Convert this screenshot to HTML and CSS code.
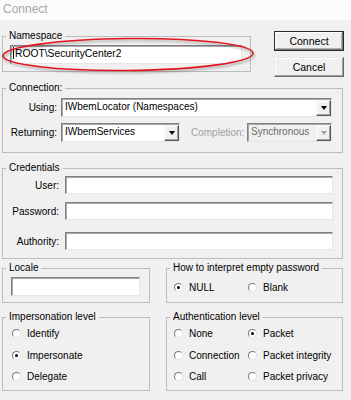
FILE: index.html
```html
<!DOCTYPE html>
<html lang="en">
<head>
    <meta charset="UTF-8">
    <title>Connect</title>
    <link rel="stylesheet" href="styles.css">
</head>
<body>
    <div class="titlebar">Connect</div>

    <div class="dialog">
        <div class="top-row">
            <fieldset class="group ns-group">
                <legend>Namespace</legend>
                <div class="group-body">
                    <div class="edit ns-edit"><span class="caret"></span>ROOT\SecurityCenter2</div>
                </div>
            </fieldset>
            <div class="buttons">
                <div class="btn btn-default">Connect</div>
                <div class="btn">Cancel</div>
            </div>
        </div>

        <fieldset class="group conn-group">
            <legend>Connection:</legend>
            <div class="group-body">
                <div class="field-row">
                    <span class="field-label">Using:</span>
                    <div class="combo using-combo">
                        <span class="combo-text">IWbemLocator (Namespaces)</span>
                        <span class="combo-btn"></span>
                    </div>
                </div>
                <div class="field-row second">
                    <span class="field-label">Returning:</span>
                    <div class="combo returning-combo">
                        <span class="combo-text">IWbemServices</span>
                        <span class="combo-btn"></span>
                    </div>
                    <span class="completion-label">Completion:</span>
                    <div class="combo completion-combo disabled">
                        <span class="combo-text">Synchronous</span>
                        <span class="combo-btn"></span>
                    </div>
                </div>
            </div>
        </fieldset>

        <fieldset class="group cred-group">
            <legend>Credentials</legend>
            <div class="group-body">
                <div class="cred-row">
                    <span class="cred-label">User:</span>
                    <div class="edit cred-edit"></div>
                </div>
                <div class="cred-row pass-row">
                    <span class="cred-label">Password:</span>
                    <div class="edit cred-edit"></div>
                </div>
                <div class="cred-row auth-row">
                    <span class="cred-label">Authority:</span>
                    <div class="edit cred-edit"></div>
                </div>
            </div>
        </fieldset>

        <div class="pair-row locale-row">
            <fieldset class="group left-group">
                <legend>Locale</legend>
                <div class="group-body locale-body">
                    <div class="edit locale-edit"></div>
                </div>
            </fieldset>
            <fieldset class="group right-group">
                <legend>How to interpret empty password</legend>
                <div class="group-body radio-grid empty-body">
                    <span class="radio-item"><span class="radio checked"></span>NULL</span>
                    <span class="radio-item"><span class="radio"></span>Blank</span>
                </div>
            </fieldset>
        </div>

        <div class="pair-row level-row">
            <fieldset class="group left-group">
                <legend>Impersonation level</legend>
                <div class="group-body radio-list imp-body">
                    <span class="radio-item"><span class="radio"></span>Identify</span>
                    <span class="radio-item"><span class="radio checked"></span>Impersonate</span>
                    <span class="radio-item"><span class="radio"></span>Delegate</span>
                </div>
            </fieldset>
            <fieldset class="group right-group">
                <legend>Authentication level</legend>
                <div class="group-body radio-grid auth-body">
                    <span class="radio-item"><span class="radio"></span>None</span>
                    <span class="radio-item"><span class="radio checked"></span>Packet</span>
                    <span class="radio-item"><span class="radio"></span>Connection</span>
                    <span class="radio-item"><span class="radio"></span>Packet integrity</span>
                    <span class="radio-item"><span class="radio"></span>Call</span>
                    <span class="radio-item"><span class="radio"></span>Packet privacy</span>
                </div>
            </fieldset>
        </div>
    </div>

    <!-- red marker drawn over the namespace box -->
    <svg class="marker" width="351" height="90" viewBox="0 0 351 90">
        <ellipse cx="128" cy="54.5" rx="125" ry="16" transform="rotate(-0.6 128 54.5)"
                 fill="none" stroke="#e3141c" stroke-width="1.6"/>
    </svg>
</body>
</html>
```

FILE: styles.css
```css
* {
    box-sizing: border-box;
}

body {
    margin: 0;
    width: 351px;
    height: 400px;
    overflow: hidden;
    position: relative;
    background-color: #f0f0f0;
    font-family: "Liberation Sans", Arial, sans-serif;
    font-size: 10px;
    color: #000;
}

.titlebar {
    height: 20px;
    background: #fbfbfb;
    color: #a8a8a8;
    font-size: 12px;
    line-height: 14px;
    padding: 2px 0 0 3px;
}

.dialog {
    padding: 10px 0 0 2px;
}

/* group boxes */
.group {
    margin: 0;
    padding: 0;
    min-width: 0;
    border: 1px solid #bcbcbc;
}

.group legend {
    margin-left: 3px;
    padding: 0 3px 0 3px;
    line-height: 12px;
    font-size: 10px;
}

.top-row {
    display: flex;
    height: 52px;
}

.ns-group {
    width: 249px;
    align-self: flex-start;
}

.ns-group .group-body {
    padding: 3px 8px 7px 7px;
}

.ns-edit {
    width: 232px;
    height: 19px;
    padding-left: 2px;
    line-height: 16px;
    font-size: 10.3px;
}

.caret {
    display: inline-block;
    width: 1px;
    height: 12px;
    background: #000;
    vertical-align: -2px;
    margin-right: 1px;
}

.buttons {
    margin-left: 23px;
    margin-top: 1px;
    display: flex;
    flex-direction: column;
    gap: 6px;
}

.btn {
    width: 70px;
    height: 20px;
    text-align: center;
    line-height: 18px;
    font-size: 10.5px;
    background: #f0f0f0;
    border: 1px solid;
    border-color: #e6e6e6 #6a6a6a #6a6a6a #e6e6e6;
    box-shadow: inset -1px -1px #a0a0a0, inset 1px 1px #fff;
}

.btn-default {
    border-color: #2a2a2a;
    box-shadow: inset -1px -1px #7a7a7a, inset 1px 1px #fff, inset -2px -2px #b0b0b0;
}

/* sunken edit fields */
.edit {
    background: #fff;
    border: 1px solid;
    border-color: #808080 #e6e6e6 #e6e6e6 #808080;
    box-shadow: inset 1px 1px #a8a8a8;
}

/* connection */
.conn-group {
    width: 341px;
}

.conn-group .group-body {
    padding: 4px 10px 10px 0;
}

.field-row {
    display: flex;
    align-items: center;
}

.field-row.second {
    margin-top: 6px;
}

.field-label {
    width: 54px;
    margin-right: 4px;
    text-align: right;
}

.combo {
    display: flex;
    height: 19px;
    background: #fff;
    border: 1px solid;
    border-color: #808080 #e6e6e6 #e6e6e6 #808080;
    box-shadow: inset 1px 1px #a8a8a8;
}

.using-combo {
    flex: 1;
}

.returning-combo {
    width: 119px;
}

.combo-text {
    flex: 1;
    padding-left: 3px;
    line-height: 16px;
    white-space: nowrap;
    overflow: hidden;
}

.combo-btn {
    width: 15px;
    margin: 1px 0 0 0;
    background: #f0f0f0;
    border: 1px solid;
    border-color: #f4f4f4 #5a5a5a #5a5a5a #f4f4f4;
    box-shadow: inset -1px -1px #a0a0a0, inset 1px 1px #fff;
    display: flex;
    align-items: center;
    justify-content: center;
}

.combo-btn::before {
    content: "";
    border-top: 4px solid #000;
    border-left: 3.5px solid transparent;
    border-right: 3.5px solid transparent;
}

.completion-label {
    margin-left: 11px;
    width: 56px;
    color: #a0a0a0;
}

.completion-combo {
    flex: 1;
}

.combo.disabled {
    background: #f0f0f0;
}

.combo.disabled .combo-text {
    color: #6d6d6d;
}

.combo.disabled .combo-btn::before {
    border-top-color: #a0a0a0;
}

/* credentials */
.cred-group {
    width: 341px;
    margin-top: 9px;
}

.cred-group .group-body {
    padding: 2px 9px 8px 0;
}

.cred-row {
    display: flex;
    align-items: center;
}

.pass-row {
    margin-top: 8px;
}

.auth-row {
    margin-top: 12px;
}

.cred-label {
    width: 56px;
    margin-right: 6px;
    text-align: right;
}

.cred-edit {
    flex: 1;
    height: 18px;
}

/* bottom pairs */
.pair-row {
    display: flex;
    gap: 16px;
}

.locale-row {
    margin-top: 3px;
}

.level-row {
    margin-top: 8px;
}

.left-group {
    width: 148px;
}

.right-group {
    width: 177px;
}

.locale-body {
    padding: 3px 0 6px 8px;
}

.locale-edit {
    width: 129px;
    height: 19px;
}

.radio-item {
    display: flex;
    align-items: center;
    gap: 6px;
    white-space: nowrap;
}

.radio {
    width: 9px;
    height: 9px;
    border-radius: 50%;
    background: #fff;
    border: 1px solid;
    border-color: #7a7a7a #e4e4e4 #e4e4e4 #7a7a7a;
    display: flex;
    align-items: center;
    justify-content: center;
}

.radio.checked::before {
    content: "";
    width: 3px;
    height: 3px;
    border-radius: 50%;
    background: #000;
}

.radio-grid {
    display: grid;
    grid-template-columns: 74px auto;
    padding-left: 7px;
}

.empty-body {
    padding-top: 8px;
}

.radio-grid .radio-item {
    height: 11px;
}

.auth-body {
    grid-auto-rows: 21.5px;
    padding-top: 0;
}

.auth-body .radio-item {
    height: auto;
}

.radio-list {
    display: flex;
    flex-direction: column;
    padding: 0 0 2px 9px;
}

.radio-list .radio-item {
    height: 21.5px;
}

.marker {
    position: absolute;
    left: 0;
    top: 0;
    filter: drop-shadow(1px 2px 1px rgba(0, 0, 0, 0.3));
}
```
